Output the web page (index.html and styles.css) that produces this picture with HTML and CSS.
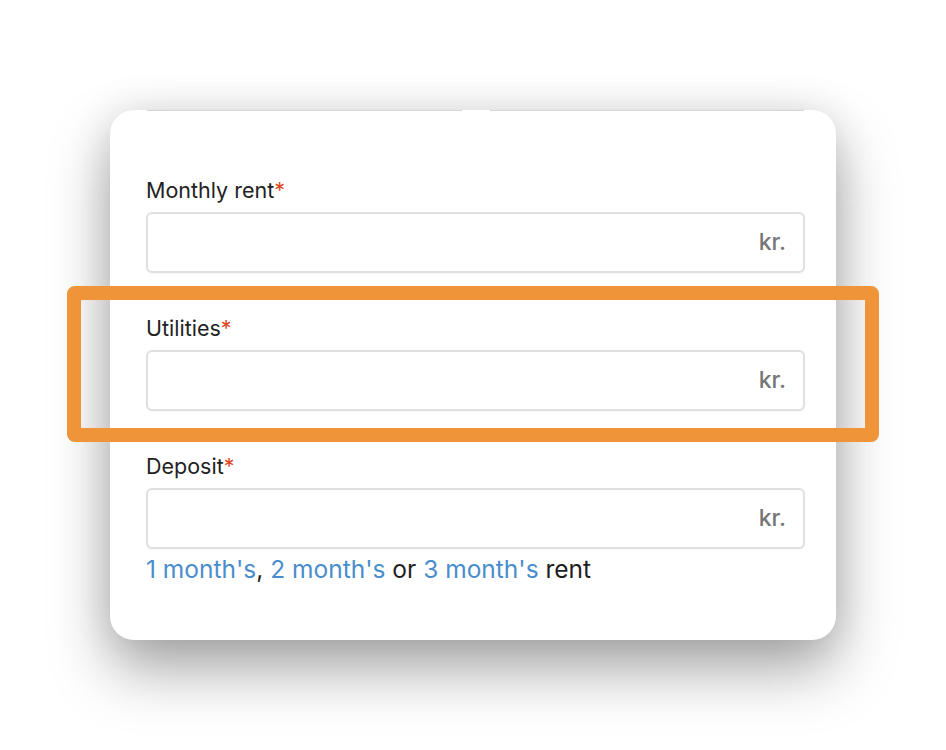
FILE: index.html
```html
<!DOCTYPE html>
<html lang="en">

<head>
    <meta charset="UTF-8">
    <meta name="viewport" content="width=device-width, initial-scale=1.0">
    <title>Rent details</title>
    <link rel="stylesheet" href="styles.css">
</head>

<body>
<div class="card">
    <!-- bottom edges of the fields above, scrolled out of view -->
    <div class="top-edges">
        <span></span>
        <span></span>
    </div>

    <div class="field field-first">
        <label for="rent">Monthly rent<span class="req">*</span></label>
        <div class="input-wrap">
            <input type="text" id="rent" class="form-control" />
            <span class="unit">kr.</span>
        </div>
    </div>

    <div class="field">
        <label for="utilities">Utilities<span class="req">*</span></label>
        <div class="input-wrap">
            <input type="text" id="utilities" class="form-control" />
            <span class="unit">kr.</span>
        </div>
    </div>

    <div class="field">
        <label for="deposit">Deposit<span class="req">*</span></label>
        <div class="input-wrap">
            <input type="text" id="deposit" class="form-control" />
            <span class="unit">kr.</span>
        </div>
        <p class="hint">
            <a href="#">1 month's</a>, <a href="#">2 month's</a> or <a href="#">3 month's</a> rent
        </p>
    </div>
</div>

<!-- highlight around the utilities field -->
<div class="highlight"></div>

</body>

</html>
```

FILE: styles.css
```css
body {
    background-color: #ffffff;
    margin: 0;
    padding: 110px 0 120px;
    font-family: Inter, "Open Sans", Arial, sans-serif;
    color: #222;
}

.card {
    width: 726px;
    height: 530px;
    box-sizing: border-box;
    margin-left: 110px;
    padding: 0 31px 0 36px;
    background: #ffffff;
    border-radius: 24px;
    box-shadow: 0 30px 60px rgba(0, 0, 0, 0.34), 0 0 40px rgba(0, 0, 0, 0.1);
}

.top-edges {
    display: flex;
    gap: 28px;
    padding: 0 1px;
}

.top-edges span {
    flex: 1;
    height: 1px;
    background-color: #d6d6d6;
}

.field {
    margin-top: 43px;
}

.field-first {
    margin-top: 67px;
}

label {
    display: block;
    font-size: 21.5px;
    line-height: 24px;
    color: #222;
    margin-bottom: 10px;
}

.req {
    color: #e0461c;
}

.input-wrap {
    position: relative;
}

.form-control {
    display: block;
    width: 100%;
    height: 61px;
    box-sizing: border-box;
    border: 2px solid #e0e0e0;
    border-radius: 6px;
    padding: 0 60px 0 16px;
    font-size: 22px;
    font-family: inherit;
    background: #fff;
    box-shadow: 0 1px 2px rgba(0, 0, 0, 0.04);
}

.unit {
    position: absolute;
    right: 19px;
    top: 0;
    line-height: 61px;
    font-size: 23px;
    font-weight: 500;
    color: #767676;
}

.hint {
    margin: 6px 0 0;
    font-size: 24.5px;
    line-height: 28px;
    color: #1e1e1e;
}

.hint a {
    color: #4a8dcc;
    text-decoration: none;
}

.highlight {
    position: absolute;
    left: 67px;
    top: 286px;
    width: 812px;
    height: 156px;
    box-sizing: border-box;
    border: 14px solid #f0943a;
    border-radius: 8px;
}
```
